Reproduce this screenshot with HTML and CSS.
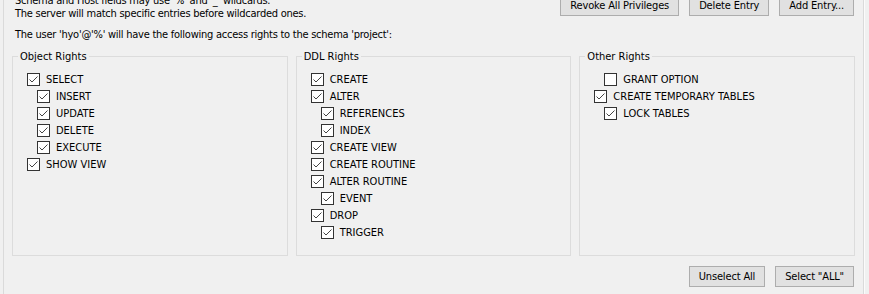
FILE: index.html
```html
<!DOCTYPE html>
<html lang="en">
<head>
    <meta charset="UTF-8">
    <title>Schema Privileges</title>
    <link rel="stylesheet" href="styles.css">
</head>
<body>
    <div class="frame">
        <div class="top">
            <div class="notes">
                <p>Schema and Host fields may use '%' and '_' wildcards.</p>
                <p>The server will match specific entries before wildcarded ones.</p>
                <p class="scope">The user 'hyo'@'%' will have the following access rights to the schema 'project':</p>
            </div>
            <div class="actions">
                <button class="btn">Revoke All Privileges</button>
                <button class="btn">Delete Entry</button>
                <button class="btn">Add Entry...</button>
            </div>
        </div>

        <div class="groups">
            <fieldset class="group">
                <legend>Object Rights</legend>
                <ul class="rights">
                    <li class="right"><span class="box checked"></span>SELECT</li>
                    <li class="right sub"><span class="box checked"></span>INSERT</li>
                    <li class="right sub"><span class="box checked"></span>UPDATE</li>
                    <li class="right sub"><span class="box checked"></span>DELETE</li>
                    <li class="right sub"><span class="box checked"></span>EXECUTE</li>
                    <li class="right"><span class="box checked"></span>SHOW VIEW</li>
                </ul>
            </fieldset>

            <fieldset class="group">
                <legend>DDL Rights</legend>
                <ul class="rights">
                    <li class="right"><span class="box checked"></span>CREATE</li>
                    <li class="right"><span class="box checked"></span>ALTER</li>
                    <li class="right sub"><span class="box checked"></span>REFERENCES</li>
                    <li class="right sub"><span class="box checked"></span>INDEX</li>
                    <li class="right"><span class="box checked"></span>CREATE VIEW</li>
                    <li class="right"><span class="box checked"></span>CREATE ROUTINE</li>
                    <li class="right"><span class="box checked"></span>ALTER ROUTINE</li>
                    <li class="right sub"><span class="box checked"></span>EVENT</li>
                    <li class="right"><span class="box checked"></span>DROP</li>
                    <li class="right sub"><span class="box checked"></span>TRIGGER</li>
                </ul>
            </fieldset>

            <fieldset class="group">
                <legend>Other Rights</legend>
                <ul class="rights">
                    <li class="right sub"><span class="box"></span>GRANT OPTION</li>
                    <li class="right"><span class="box checked"></span>CREATE TEMPORARY TABLES</li>
                    <li class="right sub"><span class="box checked"></span>LOCK TABLES</li>
                </ul>
            </fieldset>
        </div>

        <div class="bottom">
            <button class="btn">Unselect All</button>
            <button class="btn">Select "ALL"</button>
        </div>
    </div>
</body>
</html>
```

FILE: styles.css
```css
body, p, ul, li, fieldset, legend, button {
    margin: 0;
    padding: 0;
    box-sizing: border-box;
}

html, body {
    height: 100%;
    overflow: hidden;
}

body {
    font-family: "DejaVu Sans Condensed", "DejaVu Sans", sans-serif;
    font-stretch: condensed;
    font-size: 11px;
    line-height: 13px;
    color: #000;
    background: #f0f0f0;
}

.frame {
    margin-left: 3px;
    width: 861px;
    height: 100%;
    border-left: 1px solid #dadada;
    border-right: 1px solid #dadada;
    box-shadow: 1px 0 0 #fbfbfb;
    box-sizing: border-box;
}

.top {
    display: flex;
    justify-content: space-between;
    align-items: flex-start;
    padding: 0 9px 0 11px;
}

.notes {
    margin-top: -6px;
    letter-spacing: -0.25px;
}

.scope {
    margin-top: 8px;
}

.actions {
    display: flex;
    gap: 10px;
    margin-top: -5px;
}

.btn {
    font: inherit;
    letter-spacing: -0.15px;
    color: #000;
    height: 21px;
    padding: 0 9px;
    background: #e1e1e1;
    border: 1px solid #adadad;
}

.groups {
    display: flex;
    gap: 8px;
    height: 206px;
    margin-top: 9px;
    padding: 0 8px;
}

.group {
    flex: 1;
    min-width: 0;
    border: 1px solid #dcdcdc;
}

.group legend {
    margin-left: 5px;
    padding: 0 2px;
}

.rights {
    list-style: none;
    padding: 8px 0 0 14px;
}

.right {
    display: flex;
    align-items: center;
    gap: 6px;
    height: 17px;
}

.right.sub {
    padding-left: 10px;
}

.box {
    width: 13px;
    height: 13px;
    flex: none;
    border: 1px solid #333;
    background: #fff;
    box-sizing: border-box;
}

.box.checked {
    background: #fff url("data:image/svg+xml;utf8,<svg xmlns='http://www.w3.org/2000/svg' width='11' height='11' viewBox='0 0 11 11'><polyline points='1.5,5.5 4,8 9.5,2.5' fill='none' stroke='%23444' stroke-width='1'/></svg>") no-repeat center;
}

.bottom {
    display: flex;
    justify-content: flex-end;
    gap: 10px;
    margin-top: 10px;
    padding-right: 9px;
}
```
